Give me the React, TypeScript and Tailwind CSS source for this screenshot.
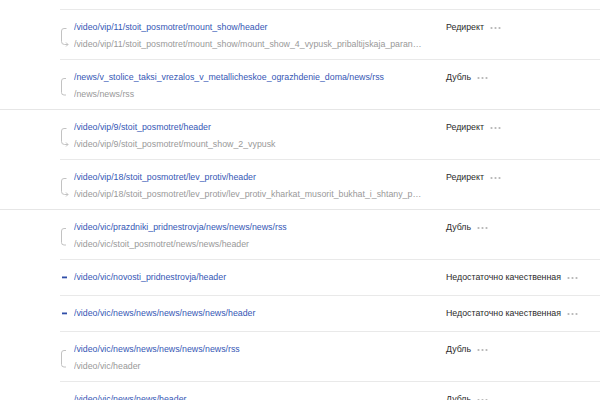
import React from "react";

type Kind = "redirect" | "dup" | "low";
type Row = { kind: Kind; main: string; sub?: string; status: string };

const groups: Row[][] = [
  [
    {
      kind: "redirect",
      main: "/video/vip/11/stoit_posmotret/mount_show/header",
      sub: "/video/vip/11/stoit_posmotret/mount_show/mount_show_4_vypusk_pribaltijskaja_paranormalnaja_bitva",
      status: "Редирект",
    },
    {
      kind: "dup",
      main: "/news/v_stolice_taksi_vrezalos_v_metallicheskoe_ograzhdenie_doma/news/rss",
      sub: "/news/news/rss",
      status: "Дубль",
    },
  ],
  [
    {
      kind: "redirect",
      main: "/video/vip/9/stoit_posmotret/header",
      sub: "/video/vip/9/stoit_posmotret/mount_show_2_vypusk",
      status: "Редирект",
    },
    {
      kind: "redirect",
      main: "/video/vip/18/stoit_posmotret/lev_protiv/header",
      sub: "/video/vip/18/stoit_posmotret/lev_protiv/lev_protiv_kharkat_musorit_bukhat_i_shtany_pachkat",
      status: "Редирект",
    },
  ],
  [
    {
      kind: "dup",
      main: "/video/vic/prazdniki_pridnestrovja/news/news/news/rss",
      sub: "/video/vic/stoit_posmotret/news/news/header",
      status: "Дубль",
    },
    {
      kind: "low",
      main: "/video/vic/novosti_pridnestrovja/header",
      status: "Недостаточно качественная",
    },
    {
      kind: "low",
      main: "/video/vic/news/news/news/news/news/header",
      status: "Недостаточно качественная",
    },
    {
      kind: "dup",
      main: "/video/vic/news/news/news/news/news/rss",
      sub: "/video/vic/header",
      status: "Дубль",
    },
    {
      kind: "dup",
      main: "/video/vic/news/news/header",
      sub: "/video/vic/news/header",
      status: "Дубль",
    },
  ],
];

function Icon({ kind }: { kind: Kind }) {
  if (kind === "low") {
    return (
      <svg width="14" height="35" viewBox="0 0 14 35" className="block">
        <rect x="2" y="16.5" width="5" height="1.8" fill="#2f4ea8" />
      </svg>
    );
  }
  if (kind === "redirect") {
    return (
      <svg width="14" height="40" viewBox="0 0 14 40" fill="none" stroke="#c2c2c2" strokeWidth="1" className="block">
        <path d="M6.5 18.5 H4 Q1.5 18.5 1.5 21 V31.5 Q1.5 34.5 4.5 34.5 H8" />
        <path d="M6 32.5 L8 34.5 L6 36.5" />
      </svg>
    );
  }
  return (
    <svg width="14" height="40" viewBox="0 0 14 40" fill="none" stroke="#c2c2c2" strokeWidth="1" className="block">
      <path d="M6 18.5 H4 Q1.5 18.5 1.5 21 V32.5 Q1.5 35 4 35 H6" />
    </svg>
  );
}

function Dots() {
  return (
    <svg width="11" height="4" viewBox="0 0 11 4" className="ml-[6px] block">
      <circle cx="1.5" cy="2" r="1.1" fill="#b5b5b5" />
      <circle cx="5.5" cy="2" r="1.1" fill="#b5b5b5" />
      <circle cx="9.5" cy="2" r="1.1" fill="#b5b5b5" />
    </svg>
  );
}

function RowView({ row, border }: { row: Row; border: boolean }) {
  return (
    <div className={`flex ${border ? "border-t border-[#e9e9e9]" : ""}`}>
      <div className="w-[14px] shrink-0">
        <Icon kind={row.kind} />
      </div>
      <div className={`w-[350px] shrink-0 pt-[9px] ${row.sub ? "pb-[6px]" : "pb-[9px]"}`}>
        <div className="truncate leading-[17px] text-[#3557b5]">{row.main}</div>
        {row.sub && <div className="truncate leading-[17px] text-[#999999]">{row.sub}</div>}
      </div>
      <div className="flex h-[17px] items-center pl-[22px] mt-[9px] text-[#2b2b2b]">
        <span className="leading-[17px]">{row.status}</span>
        <Dots />
      </div>
    </div>
  );
}

export default function App() {
  return (
    <div
      className="h-[400px] w-[600px] overflow-hidden bg-white pt-[9px] text-[8.8px]"
      style={{ fontFamily: '"Liberation Sans", Arial, sans-serif' }}
    >
      {groups.map((g, gi) => (
        <div key={gi} className="border-b border-[#e6e6e6] pl-[60px]">
          {g.map((r, ri) => (
            <RowView key={ri} row={r} border={gi === 0 || ri > 0} />
          ))}
        </div>
      ))}
    </div>
  );
}
